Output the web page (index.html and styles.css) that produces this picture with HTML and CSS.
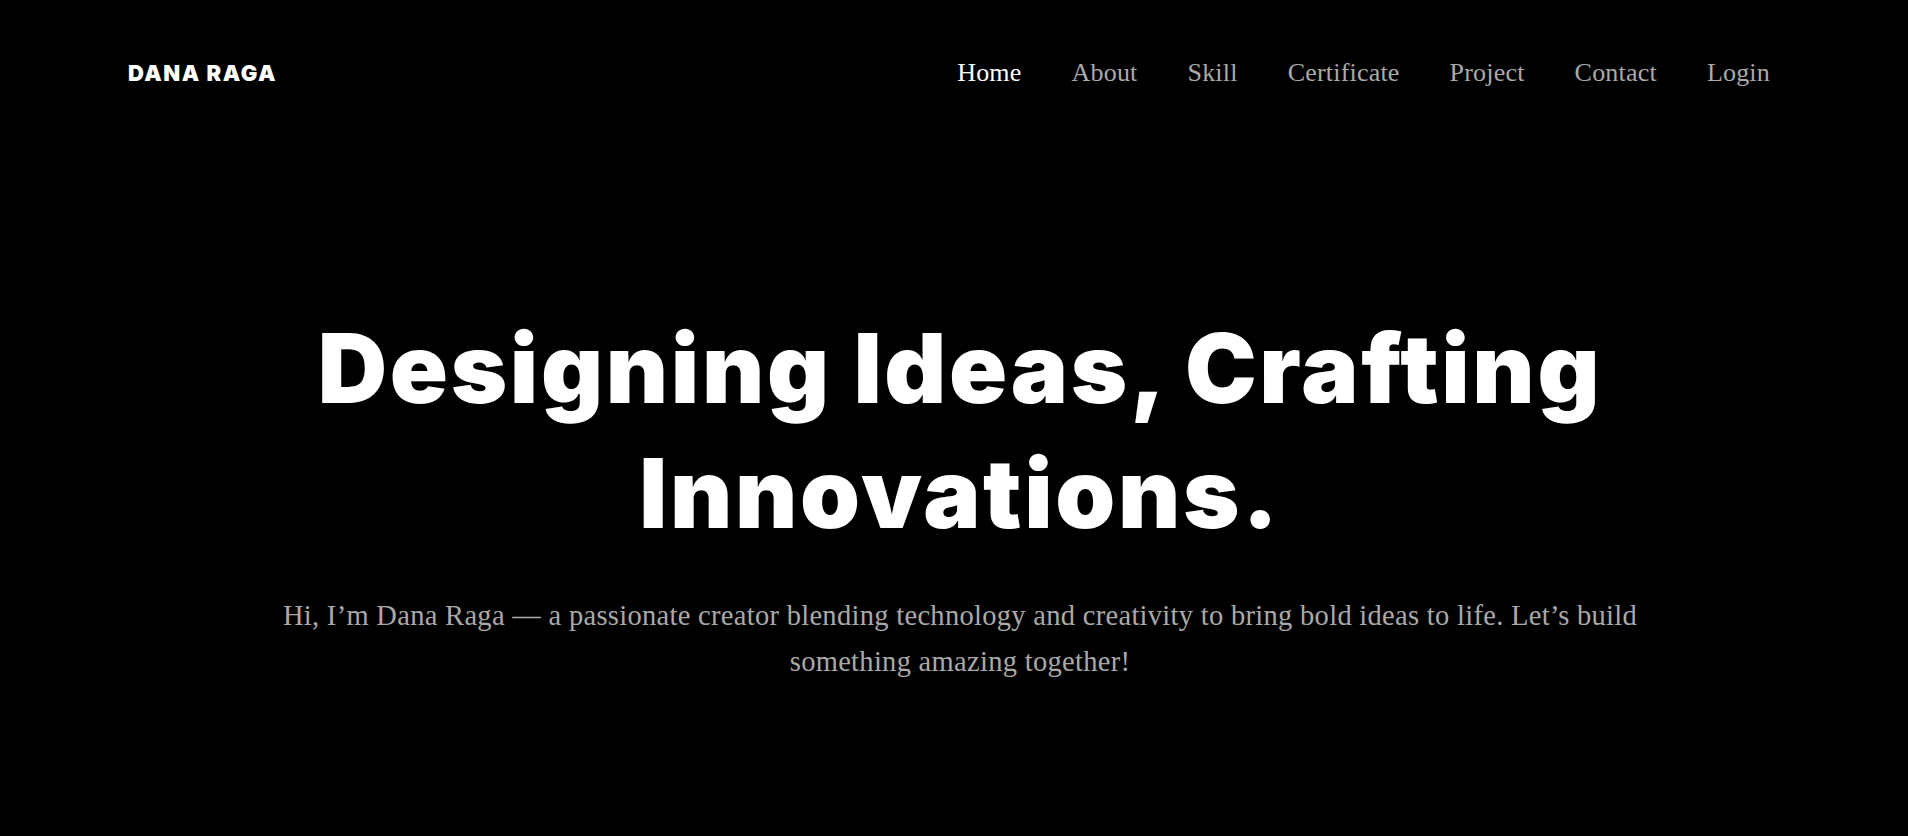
FILE: index.html
```html
<!DOCTYPE html>
<html lang="en">
<head>
<meta charset="utf-8">
<title>Dana Raga</title>
<link rel="stylesheet" href="styles.css">
</head>
<body>
<header class="site-header">
  <a class="logo" href="#">DANA RAGA</a>
  <nav class="nav">
    <a class="nav-link active" href="#">Home</a>
    <a class="nav-link" href="#">About</a>
    <a class="nav-link" href="#">Skill</a>
    <a class="nav-link" href="#">Certificate</a>
    <a class="nav-link" href="#">Project</a>
    <a class="nav-link" href="#">Contact</a>
    <a class="nav-link" href="#">Login</a>
  </nav>
</header>
<main class="hero">
  <h1 class="hero-title">Designing Ideas, Crafting Innovations.</h1>
  <p class="hero-text">Hi, I’m Dana Raga — a passionate creator blending technology and creativity to bring bold ideas to life. Let’s build something amazing together!</p>
</main>
</body>
</html>
```
FILE: styles.css
```css
* { box-sizing: border-box; }
html, body { margin: 0; padding: 0; }
body {
  background: #000;
  color: #fff;
  width: 1908px;
  height: 836px;
  overflow: hidden;
}
a { text-decoration: none; }

.site-header {
  display: flex;
  align-items: center;
  justify-content: space-between;
  height: 146px;
  padding: 0 138px 0 128px;
}
.logo {
  font-family: Inter, "Noto Sans", sans-serif;
  font-weight: 900;
  font-size: 22px;
  letter-spacing: 1.5px;
  color: #fff;
}
.nav {
  display: flex;
  gap: 50px;
}
.nav-link {
  font-family: "Liberation Serif", serif;
  font-size: 26px;
  letter-spacing: 0.2px;
  color: #aaaaaa;
}
.nav-link.active { color: #fff; }

.hero {
  display: flex;
  flex-direction: column;
  align-items: center;
  padding: 160px 0 0 12px;
  text-align: center;
}
.hero-title {
  margin: 0;
  font-family: Inter, "Noto Sans", sans-serif;
  font-weight: 900;
  font-size: 96px;
  line-height: 125px;
  letter-spacing: 2.7px;
  max-width: 1400px;
  color: #fff;
}
.hero-text {
  margin: 37px 0 0;
  max-width: 1400px;
  font-family: "Liberation Serif", serif;
  font-size: 28.5px;
  letter-spacing: 0.3px;
  line-height: 46px;
  color: #a9a9a9;
}
```
